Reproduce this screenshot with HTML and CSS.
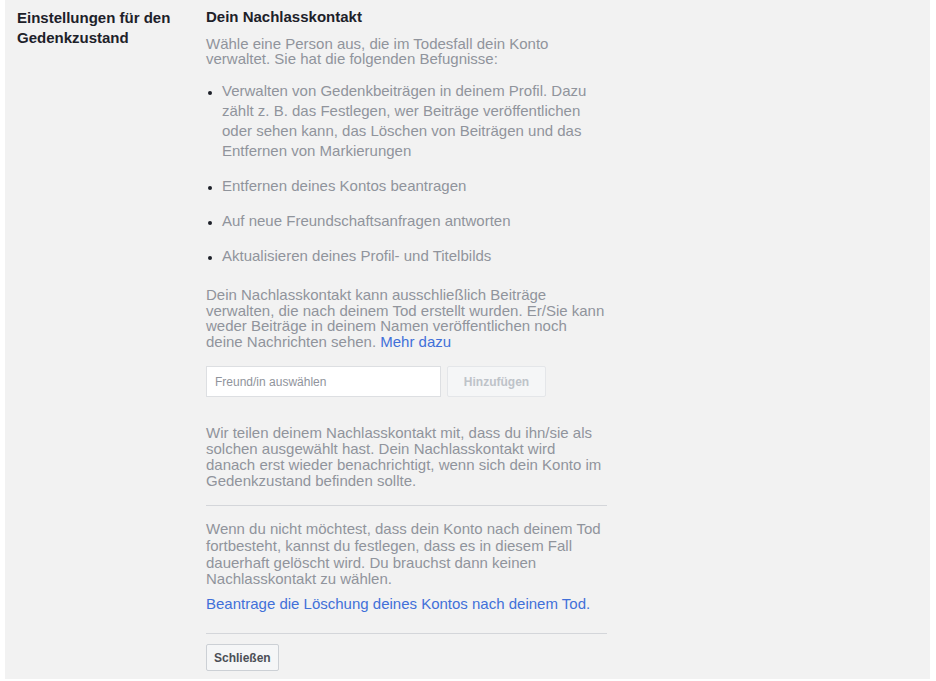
FILE: index.html
```html
<!DOCTYPE html>
<html lang="de">
<head>
  <meta charset="UTF-8" />
  <meta name="viewport" content="width=device-width, initial-scale=1.0" />
  <title>Einstellungen für den Gedenkzustand</title>
  <link rel="stylesheet" href="styles.css">
</head>
<body>
  <div class="page">
    <div class="panel">
      <div class="label">Einstellungen für den Gedenkzustand</div>

      <div class="content">
        <h3>Dein Nachlasskontakt</h3>
        <p class="intro">Wähle eine Person aus, die im Todesfall dein Konto verwaltet. Sie hat die folgenden Befugnisse:</p>

        <ul class="rights">
          <li>Verwalten von Gedenkbeiträgen in deinem Profil. Dazu zählt z. B. das Festlegen, wer Beiträge veröffentlichen oder sehen kann, das Löschen von Beiträgen und das Entfernen von Markierungen</li>
          <li>Entfernen deines Kontos beantragen</li>
          <li>Auf neue Freundschaftsanfragen antworten</li>
          <li>Aktualisieren deines Profil- und Titelbilds</li>
        </ul>

        <p class="note">Dein Nachlasskontakt kann ausschließlich Beiträge verwalten, die nach deinem Tod erstellt wurden. Er/Sie kann weder Beiträge in deinem Namen veröffentlichen noch deine Nachrichten sehen. <a href="#">Mehr dazu</a></p>

        <div class="picker">
          <input type="text" class="friend-input" placeholder="Freund/in auswählen">
          <button class="btn btn-disabled" type="button" disabled>Hinzufügen</button>
        </div>

        <p class="info">Wir teilen deinem Nachlasskontakt mit, dass du ihn/sie als solchen ausgewählt hast. Dein Nachlasskontakt wird danach erst wieder benachrichtigt, wenn sich dein Konto im Gedenkzustand befinden sollte.</p>

        <div class="divider"></div>

        <p class="delete-text">Wenn du nicht möchtest, dass dein Konto nach deinem Tod fortbesteht, kannst du festlegen, dass es in diesem Fall dauerhaft gelöscht wird. Du brauchst dann keinen Nachlasskontakt zu wählen.</p>
        <p class="delete-link"><a href="#">Beantrage die Löschung deines Kontos nach deinem Tod.</a></p>

        <div class="divider divider-bottom"></div>

        <button class="btn btn-close" type="button">Schließen</button>
      </div>
    </div>
  </div>
</body>
</html>
```

FILE: styles.css
```css
body {
  margin: 0;
  padding: 0;
  background: #ffffff;
  font-family: "Liberation Sans", Arial, sans-serif;
  font-size: 15px;
  color: #90949c;
}

.page {
  padding: 0 6px 2px 5px;
}

.panel {
  display: flex;
  background: #f2f2f2;
  height: 679px;
  box-sizing: border-box;
  padding-top: 8px;
}

.label {
  width: 177px;
  padding-left: 12px;
  font-weight: bold;
  color: #1d2129;
  line-height: 20px;
}

.content {
  width: 401px;
  padding-left: 12px;
}

h3 {
  margin: 0;
  font-size: 15px;
  line-height: 18px;
  color: #1d2129;
}

p {
  margin: 0;
}

.intro {
  margin-top: 10px;
  line-height: 15px;
}

.rights {
  margin: 15px 0 0;
  padding-left: 16px;
  line-height: 20px;
}

.rights li {
  margin-bottom: 15px;
}

.rights li::marker {
  color: #1d2129;
  font-size: 12px;
}

.rights li:last-child {
  margin-bottom: 0;
}

.note {
  max-width: 400px;
  margin-top: 21px;
  line-height: 15.6px;
}

a {
  color: #4170d9;
  text-decoration: none;
}

.picker {
  display: flex;
  gap: 6px;
  margin-top: 17px;
}

.friend-input {
  width: 235px;
  height: 31px;
  box-sizing: border-box;
  border: 1px solid #dddfe2;
  background: #ffffff;
  padding: 0 8px;
  font-family: inherit;
  font-size: 12px;
  color: #1d2129;
}

.friend-input::placeholder {
  color: #90949c;
}

.btn {
  font-family: inherit;
  font-size: 12px;
  font-weight: bold;
  border-radius: 2px;
  padding: 0 15px;
  cursor: pointer;
}

.btn-disabled {
  width: 99px;
  height: 31px;
  background: #f5f6f7;
  border: 1px solid #e4e6e9;
  color: #bec3c9;
  cursor: default;
}

.info {
  margin-top: 28px;
  line-height: 16px;
}

.divider {
  height: 1px;
  background: #d4d6da;
  margin-top: 16px;
}

.delete-text {
  margin-top: 15px;
  line-height: 16.7px;
}

.delete-link {
  margin-top: 8px;
  line-height: 16px;
}

.divider-bottom {
  margin-top: 21px;
}

.btn-close {
  margin-top: 10px;
  height: 27px;
  padding: 0 7px;
  background: #f5f6f7;
  border: 1px solid #ccd0d5;
  color: #4b4f56;
}
```
